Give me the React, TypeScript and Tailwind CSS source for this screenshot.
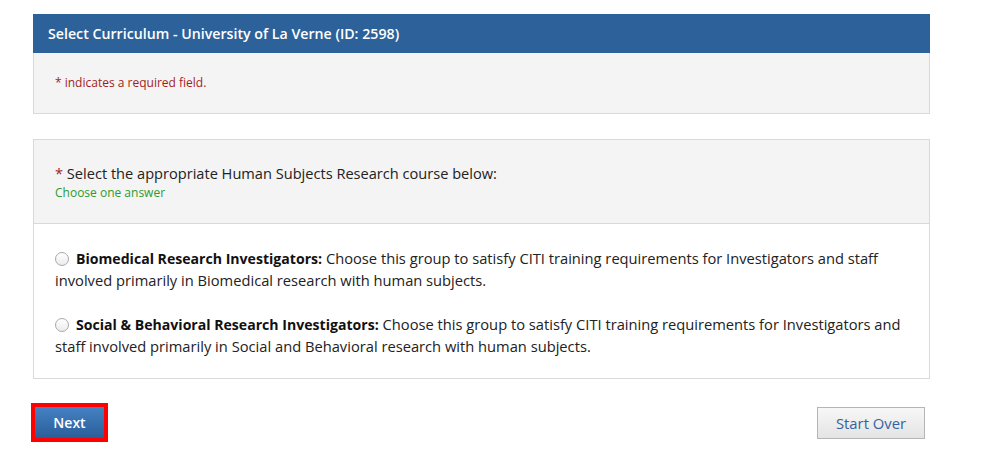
import React from "react";

export default function App() {
  return (
    <div
      className="w-[992px] h-[453px] bg-white overflow-hidden"
      style={{ fontFamily: '"Open Sans", "Liberation Sans", sans-serif' }}
    >
      <div className="ml-[33px] w-[897px] pt-[14px]">
        {/* Panel 1 */}
        <div className="border border-[#d9d9d9]">
          <div className="h-[39px] -m-px mb-0 bg-[#2c6299] flex items-center pl-[15px] text-white text-[14.2px] font-semibold">
            Select Curriculum - University of La Verne (ID: 2598)
          </div>
          <div className="h-[60px] bg-[#f4f4f4] flex items-center pl-[21px] text-[12px] text-[#a31d1d]">
            <span>* indicates a required field.</span>
          </div>
        </div>

        {/* Panel 2 */}
        <div className="mt-[25px] border border-[#d9d9d9]">
          <div className="h-[84px] bg-[#f4f4f4] border-b border-[#d9d9d9] pl-[21px] pt-[22px]">
            <div className="text-[14.6px] leading-[22px] text-[#222]">
              <span className="text-[#a31d1d]">*</span> Select the appropriate Human Subjects Research course below:
            </div>
            <div className="text-[12px] leading-[18px] text-[#2f9a2f]">Choose one answer</div>
          </div>
          <div className="bg-white pl-[21px] pr-[22px] pt-[23px] pb-[21px] text-[14.7px] leading-[22px] text-[#222]">
            <div>
              <span className="inline-block w-[14px] h-[14px] rounded-full border border-[#a9a9a9] bg-gradient-to-b from-white to-[#ececec] align-[-2px] mr-[7px]" />
              <b className="font-bold text-[14.1px] leading-none text-[#111]">Biomedical Research Investigators:</b> Choose this group to satisfy CITI training requirements for Investigators and staff involved primarily in Biomedical research with human subjects.
            </div>
            <div className="mt-[22px]">
              <span className="inline-block w-[14px] h-[14px] rounded-full border border-[#a9a9a9] bg-gradient-to-b from-white to-[#ececec] align-[-2px] mr-[7px]" />
              <b className="font-bold text-[14.1px] leading-none text-[#111]">Social &amp; Behavioral Research Investigators:</b> Choose this group to satisfy CITI training requirements for Investigators and staff involved primarily in Social and Behavioral research with human subjects.
            </div>
          </div>
        </div>

        {/* Buttons */}
        <div className="mt-[24px] flex justify-between items-start">
          <div className="-ml-[2px] border-[4px] border-[#ff0000]">
            <button className="w-[69px] h-[31px] bg-gradient-to-b from-[#4582c4] to-[#2a5e98] text-white text-[14px] font-semibold flex items-center justify-center">
              Next
            </button>
          </div>
          <button className="mt-[4px] mr-[5px] w-[108px] h-[32px] border border-[#b5b5b5] bg-gradient-to-b from-[#f7f7f7] to-[#e4e4e4] text-[#3462a0] text-[14.8px] flex items-center justify-center">
            Start Over
          </button>
        </div>
      </div>
    </div>
  );
}
